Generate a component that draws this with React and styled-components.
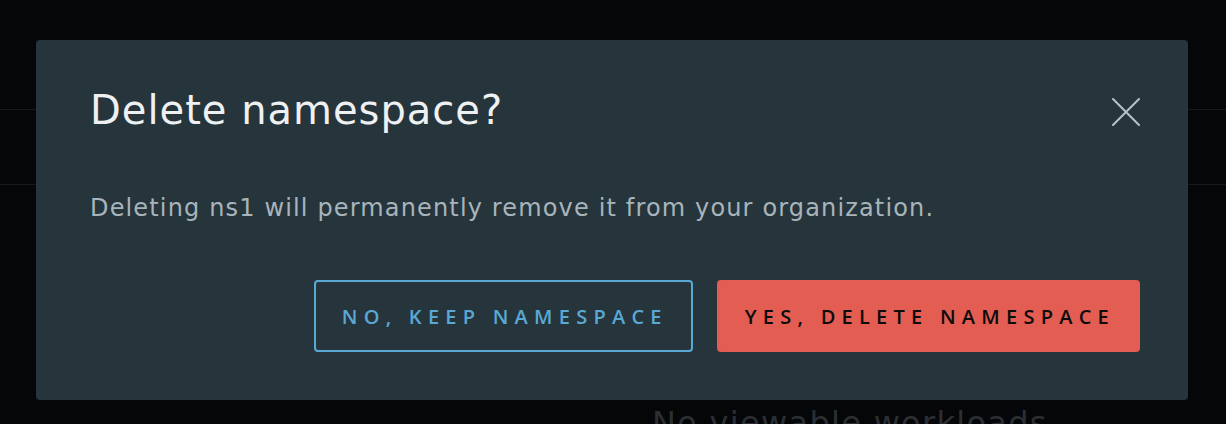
import styled, { createGlobalStyle } from "styled-components";

const GlobalStyle = createGlobalStyle`
  html, body {
    margin: 0;
    padding: 0;
    background: #050608;
  }
  body {
    font-family: "DejaVu Sans", "Liberation Sans", sans-serif;
  }
`;

const Page = styled.div`
  position: relative;
  width: 1226px;
  height: 424px;
  overflow: hidden;
  background: #050608;
`;

const TopBar = styled.div`
  height: 110px;
  border-bottom: 1px solid #15191d;
  box-sizing: border-box;
`;

const SubBar = styled.div`
  height: 75px;
  border-bottom: 1px solid #15191d;
  box-sizing: border-box;
`;

const Empty = styled.div`
  padding: 219px 0 0 652px;
  font-size: 32px;
  letter-spacing: 1.3px;
  color: #2a2f34;
  white-space: nowrap;
`;

const Modal = styled.div`
  position: absolute;
  left: 36px;
  top: 40px;
  width: 1152px;
  height: 360px;
  box-sizing: border-box;
  background: #26343c;
  border-radius: 4px;
  padding: 46px 48px 48px 54px;
  display: flex;
  flex-direction: column;
`;

const Header = styled.div`
  display: flex;
  justify-content: space-between;
  align-items: flex-start;
`;

const Title = styled.h2`
  margin: 0;
  font-size: 40px;
  line-height: 48px;
  letter-spacing: 1px;
  font-weight: 400;
  color: #eef0f2;
`;

const Close = styled.button`
  margin-top: 12px;
  padding: 0;
  width: 28px;
  height: 28px;
  border: none;
  background: none;
  cursor: pointer;
  display: flex;
`;

const Body = styled.p`
  margin: 59px 0 0;
  font-size: 24px;
  line-height: 30px;
  letter-spacing: 1.15px;
  color: #a8b4bb;
`;

const Actions = styled.div`
  margin-top: auto;
  display: flex;
  justify-content: flex-end;
  gap: 24px;
`;

const Button = styled.button`
  height: 72px;
  padding: 0 23px 0 26px;
  box-sizing: border-box;
  border-radius: 4px;
  font-family: "Open Sans", "DejaVu Sans", sans-serif;
  font-size: 20px;
  font-weight: 600;
  letter-spacing: 6.25px;
  text-transform: uppercase;
  cursor: pointer;
  border: 2px solid ${(p) => (p.$danger ? "#e35d52" : "#5aa8d4")};
  background: ${(p) => (p.$danger ? "#e35d52" : "transparent")};
  color: ${(p) => (p.$danger ? "#0c0c0c" : "#5aa8d4")};
`;

export default function App() {
  return (
    <Page>
      <GlobalStyle />
      <TopBar />
      <SubBar />
      <Empty>No viewable workloads</Empty>
      <Modal role="dialog">
        <Header>
          <Title>Delete namespace?</Title>
          <Close aria-label="Close">
            <svg width="28" height="28" viewBox="0 0 28 28">
              <path d="M1 1 L27 27 M27 1 L1 27" stroke="#b7c2c8" strokeWidth="2" strokeLinecap="round" />
            </svg>
          </Close>
        </Header>
        <Body>Deleting ns1 will permanently remove it from your organization.</Body>
        <Actions>
          <Button>No, keep namespace</Button>
          <Button $danger>Yes, delete namespace</Button>
        </Actions>
      </Modal>
    </Page>
  );
}
